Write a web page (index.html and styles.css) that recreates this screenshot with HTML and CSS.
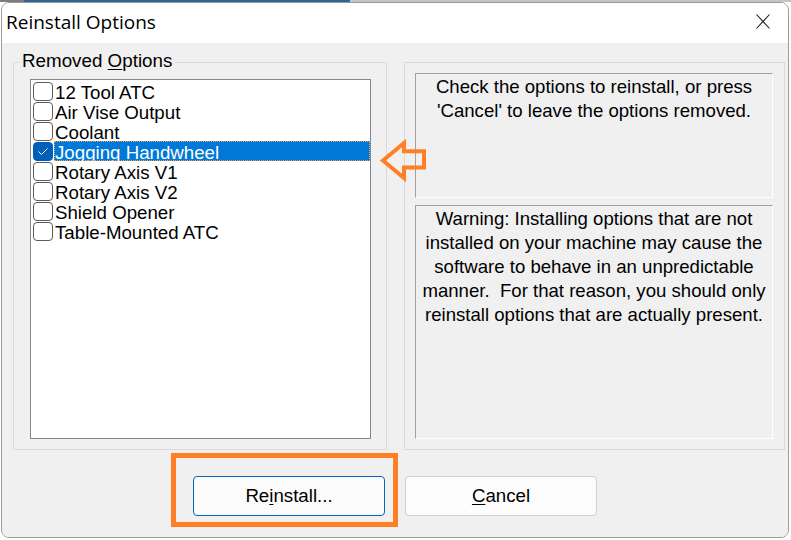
FILE: index.html
```html
<!DOCTYPE html>
<html>
<head>
<meta charset="utf-8">
<title>Reinstall Options</title>
<link rel="stylesheet" href="styles.css">
</head>
<body>
<div class="window">
  <div class="titlebar">
    <span class="title">Reinstall Options</span>
    <span class="close"><svg width="14" height="15" viewBox="0 0 14 15"><path d="M0.5 0.5 L13.5 14.5 M13.5 0.5 L0.5 14.5" stroke="#1b1b1b" stroke-width="1.1" fill="none"/></svg></span>
  </div>
  <div class="client">
    <div class="groups">
      <div class="group left">
        <div class="legend">Removed <u>O</u>ptions</div>
        <div class="listbox">
          <div class="item"><span class="cb"></span><span class="label">12 Tool ATC</span></div>
          <div class="item"><span class="cb"></span><span class="label">Air Vise Output</span></div>
          <div class="item"><span class="cb"></span><span class="label">Coolant</span></div>
          <div class="item selected"><span class="cb checked"><svg width="18" height="17" viewBox="0 0 18 17"><path d="M4.5 8.5 L7.5 11.5 L13.5 5.5" stroke="#fff" stroke-width="1" fill="none"/></svg></span><span class="label">Jogging Handwheel</span></div>
          <div class="item"><span class="cb"></span><span class="label">Rotary Axis V1</span></div>
          <div class="item"><span class="cb"></span><span class="label">Rotary Axis V2</span></div>
          <div class="item"><span class="cb"></span><span class="label">Shield Opener</span></div>
          <div class="item"><span class="cb"></span><span class="label">Table-Mounted ATC</span></div>
        </div>
      </div>
      <div class="group right">
        <div class="static info">Check the options to reinstall, or press<br>'Cancel' to leave the options removed.</div>
        <div class="static warn">Warning: Installing options that are not<br>installed on your machine may cause the<br>software to behave in an unpredictable<br>manner.&nbsp; For that reason, you should only<br>reinstall options that are actually present.</div>
      </div>
    </div>
    <div class="buttons">
      <button class="btn default">Re<u>i</u>nstall...</button>
      <button class="btn"><u>C</u>ancel</button>
    </div>
    <div class="annot-box"></div>
    <svg class="annot-arrow" width="56" height="48" viewBox="0 0 56 48"><path d="M8 23.5 L29 6 L29 14.3 L49 14.3 L49 30.5 L29 30.5 L29 41 Z" fill="none" stroke="#ff7f27" stroke-width="4" stroke-linejoin="miter"/></svg>
  </div>
</div>
</body>
</html>
```
FILE: styles.css
```css
html, body {
  margin: 0;
  padding: 0;
}
body {
  width: 791px;
  height: 540px;
  overflow: hidden;
  background: #ffffff linear-gradient(to right, #7c7c7c 0 24px, #2f6496 24px 350px, #c4c4c4 350px) top left / 100% 2px no-repeat;
  font-family: "Liberation Sans", Arial, sans-serif;
}
.window {
  margin: 2px 0 0 1px;
  width: 788px;
  height: 536px;
  box-sizing: border-box;
  border: 1px solid #9c9c9c;
  border-radius: 8px;
  overflow: hidden;
  display: flex;
  flex-direction: column;
  background: #f0f0f0;
}
.titlebar {
  height: 40px;
  flex: none;
  background: #ffffff;
  display: flex;
  align-items: center;
  justify-content: space-between;
  padding-left: 4px;
}
.title {
  font-family: "Open Sans", "Noto Sans", sans-serif;
  font-size: 19px;
  color: #000;
  margin-top: -2px;
}
.close {
  display: flex;
  margin-right: 18px;
  margin-top: -3px;
}
.client {
  flex: 1;
  position: relative;
  background: #f0f0f0;
}
.groups {
  display: flex;
  gap: 17px;
  padding: 19px 0 0 11px;
}
.group {
  position: relative;
  box-sizing: border-box;
  height: 388px;
  border: 1px solid #dadada;
}
.group.left {
  width: 374px;
  padding: 16px 15px 10px 16px;
}
.group.right {
  width: 381px;
  padding: 10px 11px 10px 10px;
  display: flex;
  flex-direction: column;
  gap: 7px;
}
.legend {
  position: absolute;
  left: 5px;
  top: -12px;
  padding: 0 3px;
  background: #f0f0f0;
  font-size: 18.8px;
  line-height: 20px;
  color: #000;
}
.legend u, .btn u {
  text-underline-offset: 2px;
}
.listbox {
  height: 360px;
  box-sizing: border-box;
  border: 1px solid #828790;
  background: #fff;
  padding-top: 1px;
}
.item {
  height: 20px;
  display: flex;
  align-items: flex-start;
}
.cb {
  flex: none;
  width: 20px;
  height: 19px;
  box-sizing: border-box;
  margin: 1px 1px 0 2px;
  border: 1px solid #5c5c5c;
  border-radius: 4px;
  background: #fff;
  display: flex;
}
.cb.checked {
  background: #005fb8;
  border-color: #005fb8;
}
.label {
  flex: 1;
  height: 20px;
  line-height: 23.5px;
  padding-left: 1px;
  font-size: 18.7px;
  white-space: nowrap;
  color: #000;
}
.item.selected .label {
  background: #0078d7;
  color: #fff;
  outline: 1px dotted #f3a04a;
  outline-offset: -1px;
}
.static {
  box-sizing: border-box;
  border-style: solid;
  border-width: 1px;
  border-color: #a0a0a0 #ffffff #ffffff #a0a0a0;
  padding-top: 1px;
  text-align: center;
  font-size: 18.6px;
  line-height: 24px;
  color: #000;
}
.static.info {
  height: 125px;
}
.static.warn {
  height: 234px;
}
.buttons {
  display: flex;
  gap: 20px;
  padding: 26px 0 0 191px;
}
.btn {
  width: 192px;
  height: 40px;
  padding: 0;
  box-sizing: border-box;
  font-family: "Liberation Sans", Arial, sans-serif;
  font-size: 18.7px;
  color: #000;
  background: #fdfdfd;
  border: 1px solid #d0d0d0;
  border-radius: 4px;
}
.btn.default {
  background: #fbfbfb;
  border-color: #0067c0;
}
.annot-box {
  position: absolute;
  left: 169px;
  top: 410px;
  width: 227px;
  height: 74px;
  box-sizing: border-box;
  border: 5px solid #ff7f27;
}
.annot-arrow {
  position: absolute;
  left: 373px;
  top: 94px;
}
```
